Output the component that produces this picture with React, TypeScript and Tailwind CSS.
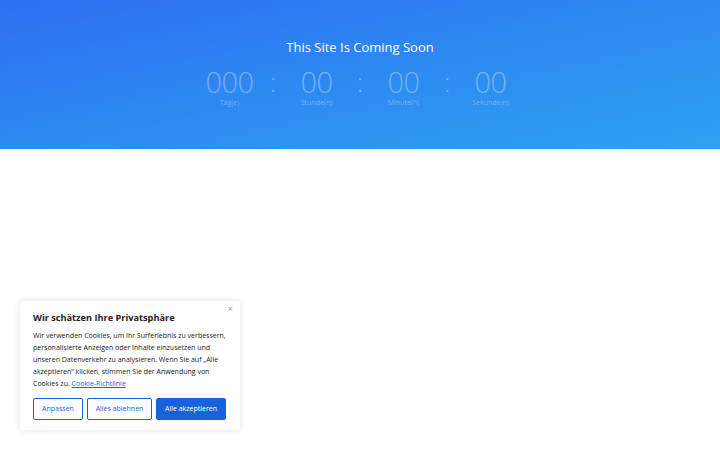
import React from "react";

const units = [
  { value: "000", label: "Tag(e)" },
  { value: "00", label: "Stunde(n)" },
  { value: "00", label: "Minute(n)" },
  { value: "00", label: "Sekunde(n)" },
];

export default function App() {
  return (
    <main
      className="relative min-h-[450px] w-full bg-white"
      style={{ fontFamily: '"Open Sans", "Noto Sans", sans-serif' }}
    >
      {/* Hero */}
      <section className="h-[149px] w-full bg-gradient-to-br from-[#2f6ef2] to-[#2ea2f0] flex flex-col items-center pt-[38px]">
        <h1 className="text-[13px] leading-[18px] text-white">This Site Is Coming Soon</h1>
        <div className="mt-[11px] flex items-start">
          {units.map((u, i) => (
            <React.Fragment key={u.label}>
              {i > 0 && (
                <div className="w-[30px] text-center text-[26px] leading-[30px] font-light text-white/35">:</div>
              )}
              <div className="w-[57px] flex flex-col items-center">
                <div className="text-[29px] leading-[30px] font-light text-white/35 tracking-[-0.5px]">{u.value}</div>
                <div className="mt-[2px] text-[7px] leading-[8px] text-white/35">{u.label}</div>
              </div>
            </React.Fragment>
          ))}
        </div>
      </section>

      {/* Cookie banner */}
      <div className="absolute left-[20px] top-[301px] w-[220px] bg-white rounded-[3px] shadow-[0_0_6px_rgba(0,0,0,0.12)] px-[13px] pt-[10px] pb-[10px]">
        <button className="absolute right-[7px] top-[3px] text-[9px] text-gray-400 leading-none">×</button>
        <h2 className="text-[9.2px] leading-[14px] font-bold text-[#212121]">Wir schätzen Ihre Privatsphäre</h2>
        <p className="mt-[5px] text-[7px] leading-[12px] text-[#212121]">
          Wir verwenden Cookies, um Ihr Surferlebnis zu verbessern, personalisierte Anzeigen oder Inhalte einzusetzen und unseren Datenverkehr zu analysieren. Wenn Sie auf „Alle akzeptieren“ klicken, stimmen Sie der Anwendung von Cookies zu.{" "}
          <a className="text-[#1863dc] underline">Cookie-Richtlinie</a>
        </p>
        <div className="mt-[8px] flex gap-[4px]">
          <button className="h-[22px] w-[50px] border-[1.5px] border-[#1863dc] rounded-[2px] text-[7px] text-[#1863dc]">Anpassen</button>
          <button className="h-[22px] w-[65px] border-[1.5px] border-[#1863dc] rounded-[2px] text-[7px] text-[#1863dc]">Alles ablehnen</button>
          <button className="h-[22px] w-[70px] bg-[#1863dc] border-[1.5px] border-[#1863dc] rounded-[2px] text-[7px] text-white">Alle akzeptieren</button>
        </div>
      </div>
    </main>
  );
}
